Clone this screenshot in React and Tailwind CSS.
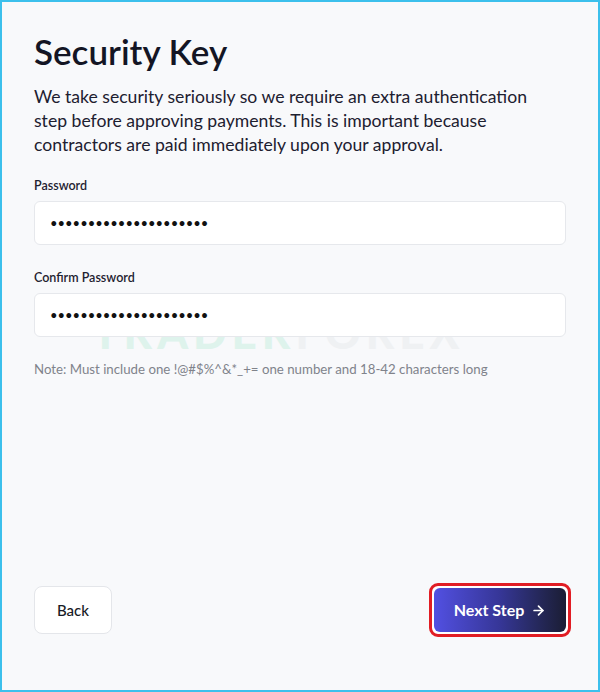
import React from 'react';
import { ArrowRight } from 'lucide-react';

const font = { fontFamily: 'Lato, "Open Sans", sans-serif' };

const PasswordField = ({ label, value }) => (
  <div className="flex flex-col">
    <label className="text-[12.5px] font-semibold text-[#1f2230] leading-[16px] mb-[7px]">{label}</label>
    <input
      type="password"
      readOnly
      value={value}
      className="h-[44px] w-full rounded-[6px] border border-[#e6e8ec] bg-white px-[15px] text-[13px] tracking-[0px] text-[#111] outline-none"
    />
  </div>
);

export default function App() {
  return (
    <div style={font} className="relative h-[692px] w-[600px] overflow-hidden border-2 border-[#3cc0ec] bg-[#f8f9fb]">
      {/* watermark */}
      <div className="pointer-events-none absolute left-[90px] top-[314px] select-none text-[44px] font-black leading-[32px] tracking-[5px]">
        <span className="text-[#def3ec]">TRADER</span>
        <span className="text-[#eff1f3]">FOREX</span>
      </div>

      <div className="relative flex h-full flex-col px-[32px] pt-[28px] pb-[53px]">
        <h1 className="text-[35px] font-semibold leading-[42px] text-[#131524]">Security Key</h1>
        <p className="mt-[13px] max-w-[500px] text-[17.6px] leading-[24px] text-[#1d2030]">
          We take security seriously so we require an extra authentication step before approving payments. This is important because contractors are paid immediately upon your approval.
        </p>

        <div className="mt-[21px] flex flex-col gap-[25px]">
          <PasswordField label="Password" value="supersecretpassword12" />
          <PasswordField label="Confirm Password" value="supersecretpassword12" />
        </div>

        <p className="mt-[24px] text-[13.25px] leading-[16px] text-[#80838b]">
          Note: Must include one !@#$%^&amp;*_+= one number and 18-42 characters long
        </p>

        <div className="mt-auto flex items-center justify-between">
          <button className="h-[48px] w-[78px] rounded-[8px] border border-[#e4e6ea] bg-white text-[15px] font-medium text-[#181a26]">
            Back
          </button>
          <div className="-mr-[5px] rounded-[9px] border-[3px] border-[#e11d24] bg-white p-[2px]">
            <button className="flex h-[44px] w-[132px] items-center justify-center gap-[7px] rounded-[6px] bg-linear-to-r from-[#5250e2] via-[#363697] to-[#1b1d34] text-[16px] font-bold text-white">
              Next Step
              <ArrowRight size={15} strokeWidth={2.75} />
            </button>
          </div>
        </div>
      </div>
    </div>
  );
}
